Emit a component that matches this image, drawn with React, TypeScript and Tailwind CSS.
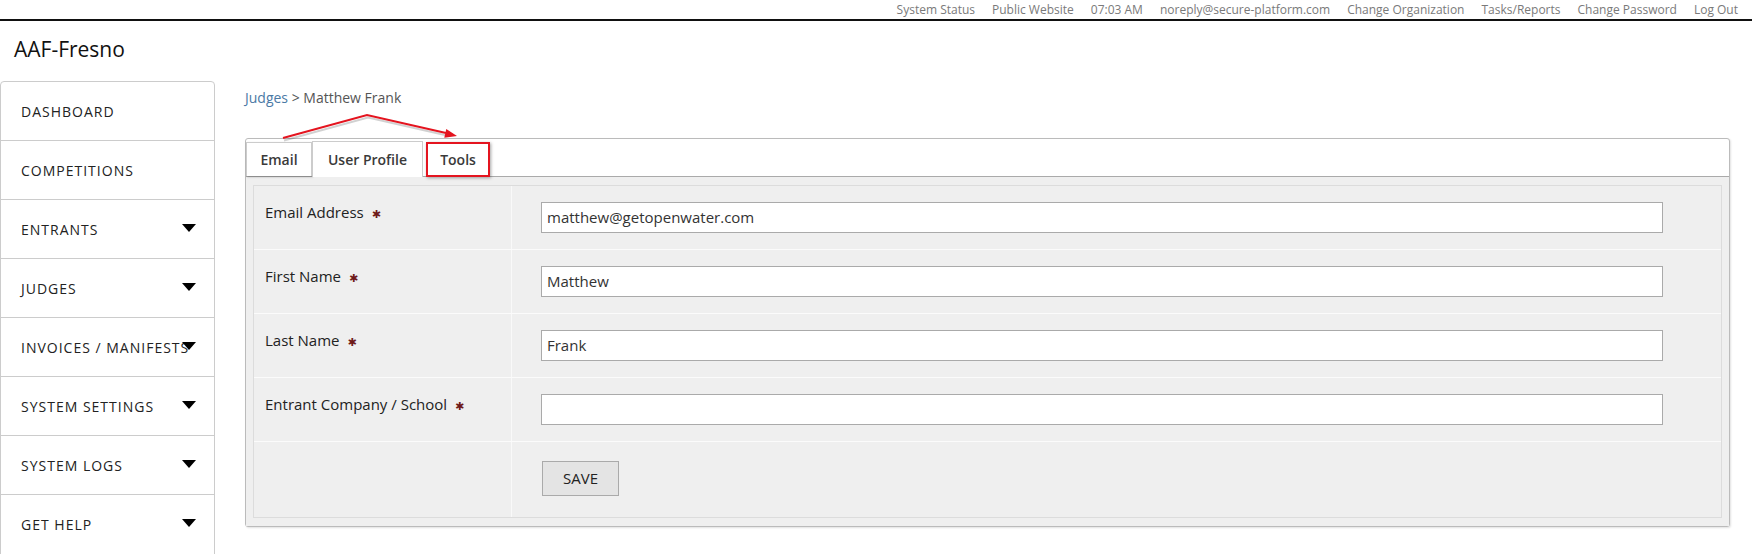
import React from "react";

const topLinks = [
  "System Status",
  "Public Website",
  "07:03 AM",
  "noreply@secure-platform.com",
  "Change Organization",
  "Tasks/Reports",
  "Change Password",
  "Log Out",
];

const navItems: { label: string; arrow: boolean }[] = [
  { label: "DASHBOARD", arrow: false },
  { label: "COMPETITIONS", arrow: false },
  { label: "ENTRANTS", arrow: true },
  { label: "JUDGES", arrow: true },
  { label: "INVOICES / MANIFESTS", arrow: true },
  { label: "SYSTEM SETTINGS", arrow: true },
  { label: "SYSTEM LOGS", arrow: true },
  { label: "GET HELP", arrow: true },
];

const fields = [
  { label: "Email Address", value: "matthew@getopenwater.com" },
  { label: "First Name", value: "Matthew" },
  { label: "Last Name", value: "Frank" },
  { label: "Entrant Company / School", value: "" },
];

function Caret() {
  return (
    <svg width="14" height="8" viewBox="0 0 14 8" className="absolute right-[18px] top-[24px]">
      <polygon points="0,0 14,0 7,8" fill="#000" />
    </svg>
  );
}

function Star() {
  return (
    <span className="ml-[8px] inline-block align-middle text-[11px] leading-none text-[#6e1a1a] font-['DejaVu_Sans',sans-serif] relative top-[1px]">
      ✱
    </span>
  );
}

export default function App() {
  return (
    <div className="font-['Open_Sans',sans-serif] bg-white text-[#222] w-[1752px] h-[554px] overflow-hidden">
      {/* top bar */}
      <div className="h-[21px] border-b-2 border-[#111] flex items-center justify-end gap-[17px] pr-[14px] text-[12px] text-[#7a7a7a]">
        {topLinks.map((t) => (
          <span key={t} className="leading-none">
            {t}
          </span>
        ))}
      </div>
      {/* title */}
      <div className="h-[60px] flex items-center pl-[14px] pb-[2px] text-[21px] text-[#111]">AAF-Fresno</div>
      {/* body */}
      <div className="flex items-start">
        <div className="w-[215px] shrink-0 border border-[#ccc] rounded-t-[4px]">
          {navItems.map((n) => (
            <div
              key={n.label}
              className="relative h-[59px] border-b border-[#ccc] last:border-b-0 flex items-center pl-[20px] text-[14px] tracking-[1px] text-[#222] whitespace-nowrap"
            >
              {n.label}
              {n.arrow && <Caret />}
            </div>
          ))}
        </div>
        <div className="relative flex-1 ml-[30px] mr-[22px]">
          <div className="mt-[7px] h-[20px] text-[14px] leading-[20px] whitespace-nowrap">
            <span className="text-[#4b79a5]">Judges</span>
            <span className="text-[#555]"> &gt; Matthew Frank</span>
          </div>
          {/* panel */}
          <div className="mt-[30px] border border-[#bbb] rounded-[3px] bg-white shadow-[1px_1px_2px_rgba(0,0,0,0.12)]">
            <div className="h-[38px] border-b border-[#aaa] flex items-end text-[14px] font-semibold text-[#3a3a3a]">
              <div className="h-[34px] w-[66px] flex items-center justify-center border border-[#ccc] border-b-0 bg-white shadow-[1px_1px_2px_rgba(0,0,0,0.25)]">
                Email
              </div>
              <div className="h-[36px] w-[111px] flex items-center justify-center border-x border-t border-[#ccc] bg-white -mb-[1px] relative">
                User Profile
              </div>
              <div className="ml-[3px] h-[35px] w-[64px] flex items-center justify-center border-2 border-[#e4141f] shadow-[1px_1px_3px_rgba(0,0,0,0.35)] -mb-[1px]">
                Tools
              </div>
            </div>
            <div className="bg-[#efefef] px-[7px] pt-[8px] pb-[8px]">
              <div className="border border-[#dcdcdc]">
                {fields.map((f) => (
                  <div key={f.label} className="grid grid-cols-[257px_1fr] h-[64px] border-b border-[#fbfbfb]">
                    <div className="pl-[11px] pt-[16px] text-[15px] leading-[20px] text-[#222]">
                      {f.label}
                      <Star />
                    </div>
                    <div className="border-l border-[#f9f9f9] pl-[29px] pr-[58px] pt-[16px]">
                      <div className="h-[31px] border border-[#aaa] bg-white pl-[5px] flex items-center text-[15px] text-[#333]">
                        {f.value}
                      </div>
                    </div>
                  </div>
                ))}
                <div className="grid grid-cols-[257px_1fr] h-[75px]">
                  <div />
                  <div className="border-l border-[#f9f9f9] pl-[30px] pt-[19px]">
                    <div className="w-[77px] h-[35px] border border-[#aaa] bg-[#e4e4e4] flex items-center justify-center text-[15px] text-[#222]">
                      SAVE
                    </div>
                  </div>
                </div>
              </div>
            </div>
          </div>
          {/* annotation arrows */}
          <svg className="absolute left-0 top-0" width="240" height="80" viewBox="0 0 240 80">
            <polyline
              points="38,58 122,35 201,53"
              fill="none"
              stroke="rgba(0,0,0,0.18)"
              strokeWidth="2"
              transform="translate(1,1.5)"
            />
            <polyline points="38,57 122,34 201,52" fill="none" stroke="#e4141f" strokeWidth="2" />
            <polygon points="212,55 199.3,56.7 201.3,47.9" fill="#e4141f" />
          </svg>
        </div>
      </div>
    </div>
  );
}
